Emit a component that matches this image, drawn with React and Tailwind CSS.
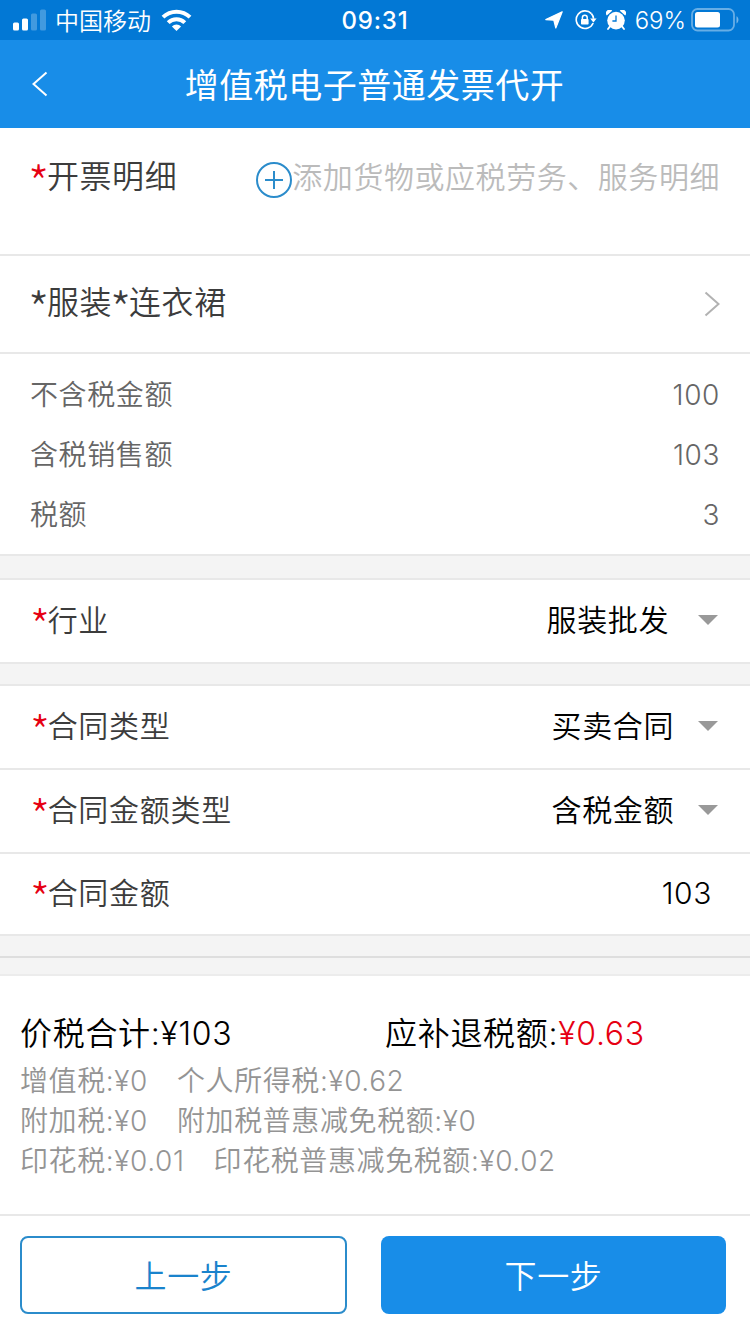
import React from 'react';

const amounts = [
  { label: '不含税金额', value: '100' },
  { label: '含税销售额', value: '103' },
  { label: '税额', value: '3' },
];

const Star = ({ className = 'text-[#e60012]' }) => (
  <span
    className={`inline-block h-0 text-[1.5em] leading-[0] align-[-0.3em] -ml-[2px] -mr-[3px] font-light font-['Noto_Sans_CJK_SC',sans-serif] ${className}`}
  >
    *
  </span>
);

const Caret = () => (
  <svg className="w-5 h-2.5 flex-shrink-0" viewBox="0 0 20 10">
    <path d="M0 0h20L10 10z" fill="#999" />
  </svg>
);

const StatusBar = () => (
  <div className="h-10 bg-[#0278d5] text-white flex items-center flex-shrink-0 pl-[13px] pr-[11px]">
    <div className="flex-1 flex items-center">
      <svg className="w-[33px] h-[22px]" viewBox="0 0 33 22" fill="#fff">
        <rect x="0" y="13.5" width="6" height="8" rx="1.5" />
        <rect x="9" y="9.5" width="6" height="12" rx="1.5" />
        <rect x="18" y="4.5" width="6" height="17" rx="1.5" opacity="0.25" />
        <rect x="27" y="0.5" width="6" height="21" rx="1.5" opacity="0.25" />
      </svg>
      <span className="ml-[9px] pt-[3px] text-[24px] leading-none">中国移动</span>
      {/* Wifi */}
      <svg className="ml-[10px] w-[31px] h-[22px]" viewBox="0 0 31 22" fill="none" stroke="#fff" strokeWidth="4">
        <path d="M2 8.2a19.2 19.2 0 0 1 27 0" />
        <path d="M7.2 13.6a11.8 11.8 0 0 1 16.6 0" />
        <path d="M15.5 22l-4.6-4.6a6.6 6.6 0 0 1 9.2 0z" fill="#fff" stroke="none" />
      </svg>
    </div>
    <span className="pt-px pr-[2px] text-[24px] leading-none font-medium tracking-[0.8px]">09:31</span>
    <div className="flex-1 flex items-center justify-end">
      {/* Location arrow */}
      <svg className="w-[18px] h-[18px]" viewBox="0 0 18 18" fill="#fff" stroke="#fff" strokeWidth="1.2" strokeLinejoin="round">
        <path d="M17.2 0.8L10.8 17l-2-7.8L0.8 8.6z" />
      </svg>
      {/* Rotation lock */}
      <svg className="ml-[12px] w-[22px] h-[20px]" viewBox="0 0 22 20" fill="none" stroke="#fff">
        <path d="M16.4 3.6A8.8 8.8 0 1 0 18.2 13" strokeWidth="1.6" />
        <path d="M15.2 8.6h6.4l-3.2 4z" fill="#fff" stroke="none" />
        <path d="M16.4 3.6a8.8 8.8 0 0 1 2.2 5.2" strokeWidth="1.6" />
        <rect x="6" y="9" width="7.6" height="5.6" rx="0.8" fill="#fff" stroke="none" />
        <path d="M7.4 9.4V7.6a2.4 2.4 0 0 1 4.8 0v1.8" strokeWidth="1.5" />
      </svg>
      {/* Alarm clock */}
      <svg className="ml-[9px] w-[20px] h-[20px]" viewBox="0 0 20 20" fill="#fff">
        <circle cx="10" cy="10.6" r="8.8" />
        <path d="M0.8 5.4A3.4 3.4 0 0 1 6.2 0.8zM19.2 5.4a3.4 3.4 0 0 0-5.4-4.6z" />
        <path d="M4 16.4l-2 2.6M16 16.4l2 2.6" stroke="#fff" strokeWidth="1.8" strokeLinecap="round" />
        <path d="M10 5.4v5.6H6.4" fill="none" stroke="#0278d5" strokeWidth="1.3" />
      </svg>
      <span className="ml-[9px] pt-px text-[24px] leading-none">69%</span>
      {/* Battery */}
      <svg className="ml-[5px] w-[48px] h-[24px]" viewBox="0 0 48 24">
        <rect x="1" y="1" width="42" height="21.5" rx="5.5" fill="none" stroke="#fff" strokeOpacity="0.4" strokeWidth="1.8" />
        <rect x="4" y="4" width="25" height="15.5" rx="2.5" fill="#fff" />
        <path d="M45.5 8.2c2.6 1.2 2.6 6 0 7.2z" fill="#fff" opacity="0.45" />
      </svg>
    </div>
  </div>
);

const Header = () => (
  <header className="h-[88px] bg-[#188de8] text-white flex items-center flex-shrink-0 px-8">
    <svg className="w-4 h-[26px]" viewBox="0 0 16 26" fill="none" stroke="#fff" strokeWidth="2">
      <path d="M14.5 1.5L1.5 13l13 11.5" />
    </svg>
    <h1 className="flex-1 text-center text-[34px] leading-none font-normal tracking-[0.5px] pr-[17px] pt-[3px]">
      增值税电子普通发票代开
    </h1>
  </header>
);

const FieldRow = ({ label, value, className, valueClass, select = true }) => (
  <div className={`bg-white border-b-2 border-[#e8e8e8] flex items-center justify-between pl-8 pb-[2px] ${className}`}>
    <span className="pb-px text-[30px] leading-none tracking-[0.7px] text-[#3c3c3c]">
      <Star />
      {label}
    </span>
    <div className="flex items-center pr-8">
      <span className={`text-[30px] leading-none tracking-[0.6px] text-black ${valueClass}`}>{value}</span>
      {select && <Caret />}
    </div>
  </div>
);

const Summary = () => (
  <section className="h-[240px] bg-white border-b-2 border-[#e8e8e8] pl-5 pt-[35px]">
    <div className="flex h-[50px] pb-[4px] items-center text-[32px] leading-none tracking-[0.7px] text-black">
      <span className="w-[365px]">价税合计:¥103</span>
      <span>
        应补退税额:<span className="text-[#e60012]">¥0.63</span>
      </span>
    </div>
    <div className="text-[28px] leading-10 tracking-[0.6px] text-[#949494]">
      <p className="flex gap-[29px]">
        <span>增值税:¥0</span>
        <span>个人所得税:¥0.62</span>
      </p>
      <p className="flex gap-[29px]">
        <span>附加税:¥0</span>
        <span>附加税普惠减免税额:¥0</span>
      </p>
      <p className="flex gap-[29px]">
        <span>印花税:¥0.01</span>
        <span>印花税普惠减免税额:¥0.02</span>
      </p>
    </div>
  </section>
);

const App = () => {
  return (
    <div className="w-[750px] h-[1334px] overflow-hidden bg-white flex flex-col whitespace-nowrap font-[350] font-['Inter','Noto_Sans_CJK_SC',sans-serif]">
      <StatusBar />
      <Header />

      {/* Invoice details */}
      <div className="h-[128px] border-b-2 border-[#e8e8e8] flex justify-between pl-[30px] pr-[30px] pt-[33px]">
        <span className="text-[32px] leading-8 tracking-[0.6px] text-[#3c3c3c]">
          <Star />
          开票明细
        </span>
        <div className="flex items-start">
          <svg className="mt-px w-9 h-9" viewBox="0 0 36 36" fill="none" stroke="#2b8ccb" strokeWidth="2">
            <circle cx="18" cy="18" r="17" />
            <path d="M9 18h18M18 9v18" />
          </svg>
          <span className="text-[30px] leading-8 tracking-[0.55px] text-[#bbb]">
            添加货物或应税劳务、服务明细
          </span>
        </div>
      </div>

      <div className="h-[98px] border-b-2 border-[#e8e8e8] flex items-center justify-between px-[30px]">
        <span className="pb-[2px] text-[32px] leading-none tracking-[0.6px] text-[#3c3c3c]">
          <Star className="text-[#3c3c3c]" />
          服装
          <Star className="text-[#3c3c3c]" />
          连衣裙
        </span>
        <svg className="w-4 h-[26px]" viewBox="0 0 16 26" fill="none" stroke="#b2b2b2" strokeWidth="2">
          <path d="M1.5 1.5L14.5 13l-13 11.5" />
        </svg>
      </div>

      <div className="h-[202px] border-b-2 border-[#e8e8e8] px-[30px] pt-[11px]">
        {amounts.map((item) => (
          <div
            key={item.label}
            className="h-[60px] flex items-center justify-between text-[28px] leading-none tracking-[0.6px] text-[#666]"
          >
            <span>{item.label}</span>
            <span>{item.value}</span>
          </div>
        ))}
      </div>

      <div className="h-6 bg-[#f4f4f4] border-b-2 border-[#e8e8e8]" />
      <FieldRow label="行业" value="服装批发" className="h-[84px]" valueClass="mr-[29px]" />
      <div className="h-[22px] bg-[#f4f4f4] border-b-2 border-[#e8e8e8]" />
      <FieldRow label="合同类型" value="买卖合同" className="h-[84px]" valueClass="mr-[24px]" />
      <FieldRow label="合同金额类型" value="含税金额" className="h-[84px]" valueClass="mr-[24px]" />
      <FieldRow label="合同金额" value="103" className="h-[82px]" valueClass="mr-[6px]" select={false} />
      <div className="h-[22px] bg-[#f4f4f4] border-b-2 border-[#dedede]" />
      <div className="h-[18px] bg-[#f4f4f4] border-b-2 border-[#ececec]" />

      <Summary />

      {/* Footer buttons */}
      <div className="flex pt-5 pl-5 gap-[34px]">
        <button className="w-[327px] h-[78px] pt-[4px] rounded-lg border-2 border-[#2b8ccb] text-[#1a83cc] text-[32px] tracking-[0.6px]">
          上一步
        </button>
        <button className="w-[345px] h-[78px] pt-[4px] rounded-lg bg-[#188de8] text-white text-[32px] tracking-[0.6px]">
          下一步
        </button>
      </div>
    </div>
  );
};

export default App;
